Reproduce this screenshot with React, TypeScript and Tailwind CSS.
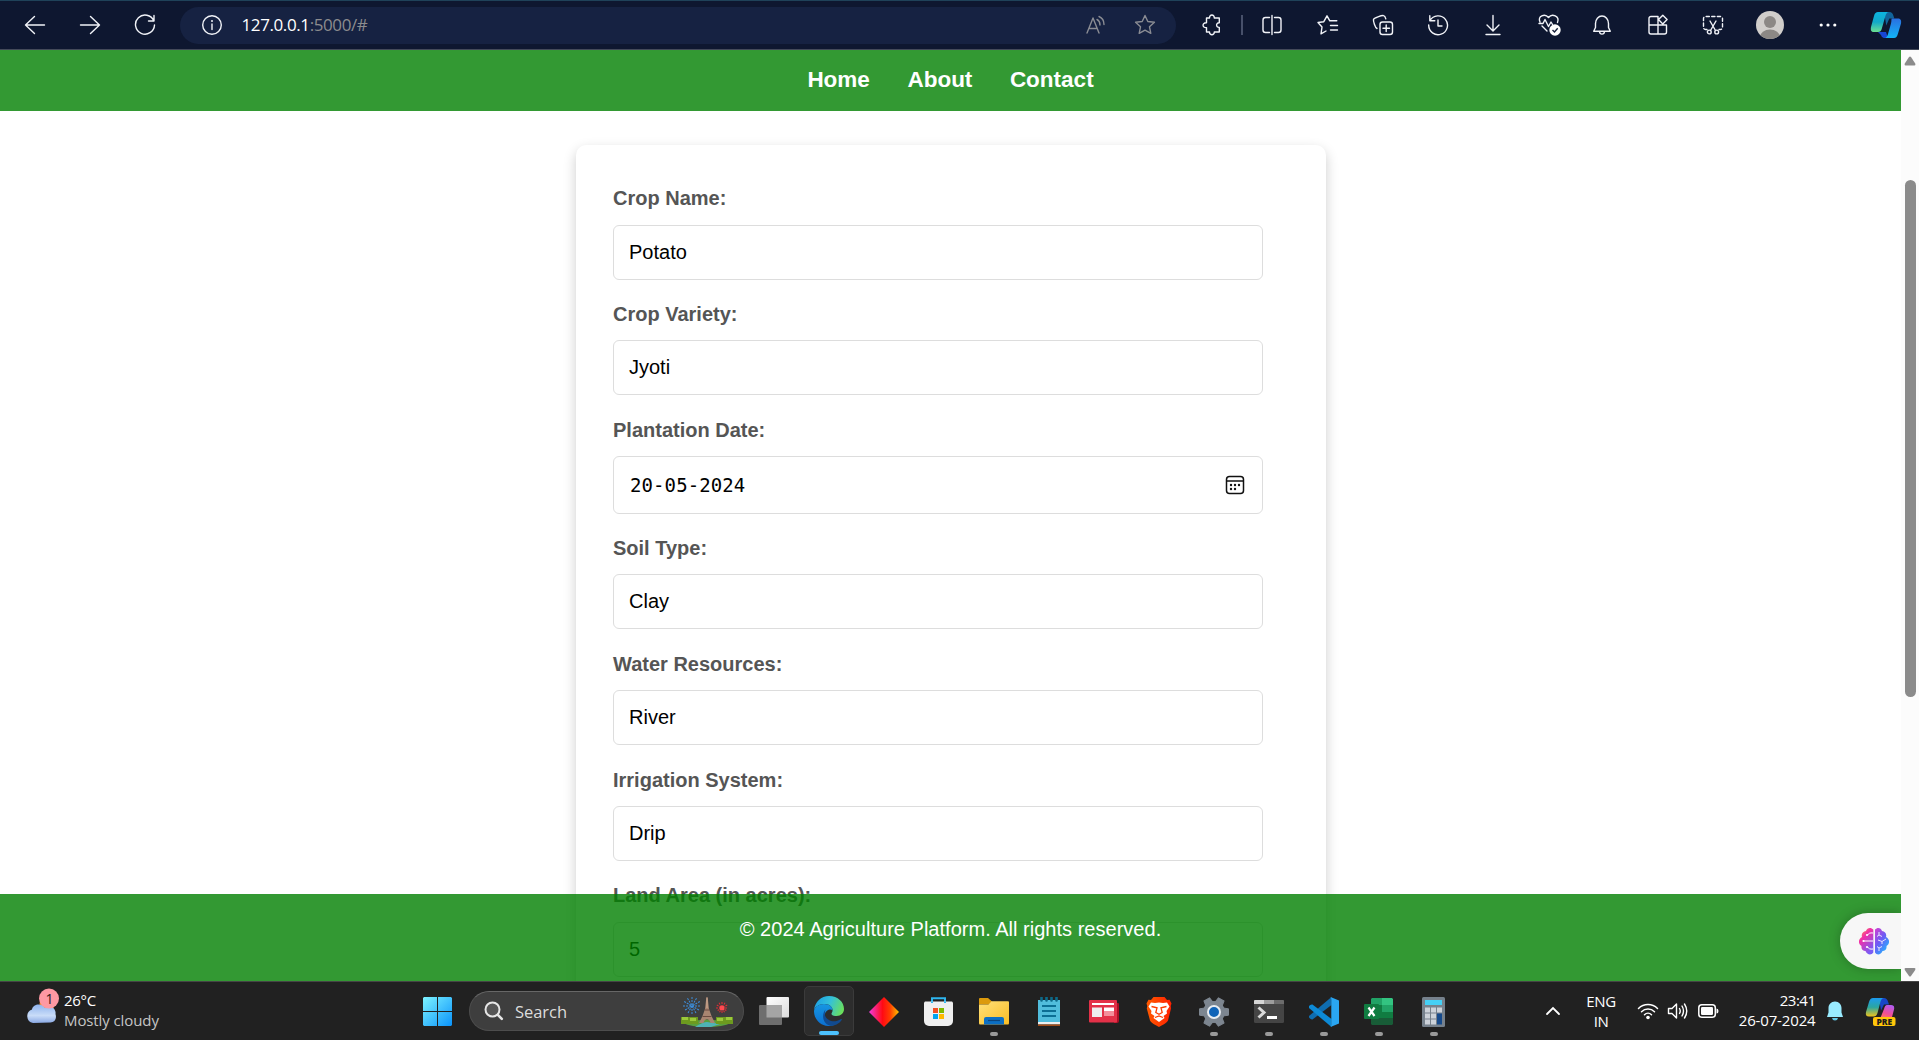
import type { ReactNode } from "react";

type IconProps = { w: number; h: number; className?: string; children: ReactNode };

function Icon({ w, h, className = "", children }: IconProps) {
  return (
    <svg width={w} height={h} viewBox={`0 0 ${w} ${h}`} fill="none" className={`shrink-0 ${className}`}>
      {children}
    </svg>
  );
}

/* ---------- Browser toolbar ---------- */

const line = { stroke: "#f1f3f8", strokeWidth: 1.4, strokeLinecap: "round", strokeLinejoin: "round" } as const;
const dim = { stroke: "#8a8c93", strokeWidth: 1.4, strokeLinecap: "round", strokeLinejoin: "round" } as const;

function Cell({ className, children }: { className: string; children: ReactNode }) {
  return <div className={`flex h-full shrink-0 items-center justify-center ${className}`}>{children}</div>;
}

function CopilotLogo() {
  return (
    <Icon w={32} h={28}>
      <defs>
        <linearGradient id="cpA" x1="0" y1="0" x2="0" y2="1">
          <stop offset="0" stopColor="#0cb4e0" />
          <stop offset="0.5" stopColor="#12a9c9" />
          <stop offset="1" stopColor="#6be092" />
        </linearGradient>
        <linearGradient id="cpB" x1="0" y1="0" x2="0" y2="1">
          <stop offset="0" stopColor="#2a6fe0" />
          <stop offset="1" stopColor="#12b4f8" />
        </linearGradient>
      </defs>
      <path d="M14 1h5c3 0 4 2 4.500 4l.8 2.500h-5l-3 7z" fill="#11649b" />
      <path d="M8 21h8l2 6h-3c-3 0-3.500-2-4-3z" fill="#1846d4" />
      <path d="M8 1h11c-2 0-3 2-3.600 4L12 17c-.8 3-2 4-4 4H4c-3 0-3.500-2-3-5L4 5c.8-3 2-4 4-4z" fill="url(#cpA)" />
      <path d="M22 7.500h6c3 0 3.500 2.500 3 5l-3 10c-.8 3-2 4.500-4 4.500H14.500c2 0 2.800-2 3.500-4l3-10.500c.8-3 0-5 1-5z" fill="url(#cpB)" />
    </Icon>
  );
}

function Toolbar() {
  return (
    <div className="flex h-[50px] w-full shrink-0 items-center border-t border-b border-t-[#1f4259] border-b-[#444a5a] bg-[#0e1730]">
      <Cell className="ml-[7.500px] w-[55px] pb-px">
        <Icon w={22} h={22}><path d="M20.500 11H1.500M10.500 2.500L1.500 11l9 8.500" {...line} /></Icon>
      </Cell>
      <Cell className="w-[55px] pb-px">
        <Icon w={22} h={22}><path d="M1.500 11h19M11.500 2.500l9 8.500-9 8.500" {...line} /></Icon>
      </Cell>
      <Cell className="w-[55px]">
        <Icon w={22} h={22}><path d="M19.800 7A9.500 9.500 0 1 0 20.500 11M20 1.500V7h-5.500" {...line} /></Icon>
      </Cell>
      <div className="ml-[7.500px] flex h-[37px] w-[996px] shrink-0 items-center rounded-full bg-[#162242]">
        <Cell className="w-[61.500px]">
          <Icon w={22} h={22} className="mr-[-2.500px]">
            <circle cx="11" cy="11" r="9.300" {...line} />
            <path d="M11 10v5.500" {...line} />
            <circle cx="11" cy="7" r="1" fill="#f1f3f8" />
          </Icon>
        </Cell>
        <div className="flex-1 font-['Open_Sans',sans-serif] text-[17px] tracking-[-0.4px] whitespace-nowrap text-white">
          <span>127.0.0.1</span>
          <span className="text-[#8c8c8e]">:5000/#</span>
        </div>
        <Cell className="w-[49px]">
          <Icon w={22} h={22}>
            <path d="M2 19L8 4l6 15M4 14.500h8" {...dim} />
            <path d="M12 5.500c2 1 3 3 3 5.500M14 2.500c3.500 1.500 5 4.500 5 8" {...dim} />
          </Icon>
        </Cell>
        <Cell className="mr-[7px] w-[49px]">
          <Icon w={22} h={22}>
            <path d="M11 1.500l2.800 6 6.600.8-4.900 4.500 1.300 6.500L11 16.200l-5.800 3.100 1.300-6.500L1.600 8.300l6.600-.8z" {...dim} />
          </Icon>
        </Cell>
      </div>
      <Cell className="ml-[8px] w-[55px]">
        <Icon w={22} h={22}>
          <path d="M5.500 4h3c-.2-4 5-4 4.800 0h5v4.800c-3.600-.4-3.600 5 0 4.600V18h-5c.2 3.600-5 3.600-4.800 0h-3v-4.400c-4.600.4-4.600-5.200 0-4.800z" {...line} />
        </Icon>
      </Cell>
      <div className="ml-[1.500px] h-5 w-0.5 shrink-0 bg-[#47506a]" />
      <Cell className="ml-[1.500px] w-[55px]">
        <Icon w={22} h={22}>
          <path d="M8.500 3.500h-4a2.500 2.500 0 0 0-2.500 2.500v10a2.500 2.500 0 0 0 2.500 2.500h4M13.500 3.500h4a2.500 2.500 0 0 1 2.500 2.500v10a2.500 2.500 0 0 1-2.500 2.500h-4M11 1.500v19" {...line} />
        </Icon>
      </Cell>
      <Cell className="ml-px w-[55px]">
        <Icon w={22} h={22}>
          <path d="M9 17l-5 2.800L5 13 1 8.500l5.800-.8L10 1.800l2.800 5h7M13.500 11.500h7M13.500 16h7" {...line} />
        </Icon>
      </Cell>
      <Cell className="w-[55px]">
        <Icon w={22} h={22}>
          <rect x="8" y="8" width="12.500" height="12.500" rx="2.500" {...line} />
          <path d="M14.200 11v6.500M11 14.200h6.500M5 14.500C3 13.500 1.200 7 1.500 5.500 2 4 9.500 1.300 11.500 1.600c1.200.2 1.900 1.600 2.300 3.200" {...line} />
        </Icon>
      </Cell>
      <Cell className="w-[55px]">
        <Icon w={22} h={22}>
          <path d="M3 6.500A9.400 9.400 0 1 1 1.700 11M2.800 1.800v5h5M11 6v6h4" {...line} />
        </Icon>
      </Cell>
      <Cell className="w-[55px]">
        <Icon w={22} h={22}><path d="M11 1.500v15M5 11l6 6 6-6M4 20.500h14" {...line} /></Icon>
      </Cell>
      <Cell className="w-[55px]">
        <Icon w={24} h={24} className="ml-[2px]">
          <path d="M3 9C0 3 8 0 11.500 4.500 15 0 23 3 20.500 9.500M2 10.500h4l2-4 3.500 7 2.500-4.500 1.500 2.500M5 13l5 5" {...line} />
          <circle cx="18" cy="17" r="5.700" fill="#fff" />
          <path d="M15.500 17l2 2 3.200-3.700" stroke="#17203a" strokeWidth="1.400" />
        </Icon>
      </Cell>
      <Cell className="w-[53px] pb-px">
        <Icon w={22} h={22}>
          <path d="M4.500 9.500a6.500 7.500 0 0 1 13 0v4l1.800 3.700H2.700l1.800-3.700zM8.500 17.500c.3 3.500 4.700 3.500 5 0" {...line} />
        </Icon>
      </Cell>
      <Cell className="w-[58px]">
        <Icon w={22} h={22} className="ml-px">
          <path d="M11 2.500H4a2 2 0 0 0-2 2V18a2 2 0 0 0 2 2h13.500a2 2 0 0 0 2-2v-7H2M11 2.500V20M15.800 1.300l4.300 4.300-4.300 4.300-4.300-4.300z" {...line} />
        </Icon>
      </Cell>
      <Cell className="w-[53px]">
        <Icon w={22} h={22}>
          <path d="M5 15.500H3.500a2 2 0 0 1-2-2v-9a2 2 0 0 1 2-2h15a2 2 0 0 1 2 2v9a2 2 0 0 1-2 2H17" {...line} strokeDasharray="3.200 2.400" />
          <path d="M8 7l5.500 9.500M14 7l-5.500 9.500" {...line} />
          <circle cx="7.300" cy="18" r="1.900" {...line} />
          <circle cx="14.700" cy="18" r="1.900" {...line} />
        </Icon>
      </Cell>
      <Cell className="ml-px w-[60px]">
        <Icon w={28} h={28}>
          <clipPath id="avatar"><circle cx="14" cy="14" r="14" /></clipPath>
          <g clipPath="url(#avatar)">
            <rect width="28" height="28" fill="#d1cecb" />
            <circle cx="14" cy="11" r="6" fill="#8c8885" />
            <ellipse cx="14" cy="26" rx="10" ry="7.500" fill="#8c8885" />
          </g>
        </Icon>
      </Cell>
      <Cell className="w-[55px]">
        <Icon w={18} h={4}>
          <circle cx="2.200" cy="2" r="1.600" fill="#fff" />
          <circle cx="9" cy="2" r="1.600" fill="#fff" />
          <circle cx="15.800" cy="2" r="1.600" fill="#fff" />
        </Icon>
      </Cell>
      <Cell className="w-[62px]"><CopilotLogo /></Cell>
    </div>
  );
}

/* ---------- Page ---------- */

const fields = [
  { label: "Crop Name:", value: "Potato" },
  { label: "Crop Variety:", value: "Jyoti" },
  { label: "Plantation Date:", value: "20-05-2024", date: true },
  { label: "Soil Type:", value: "Clay" },
  { label: "Water Resources:", value: "River" },
  { label: "Irrigation System:", value: "Drip" },
  { label: "Land Area (in acres):", value: "5" },
];

function CalendarIcon() {
  return (
    <Icon w={20} h={20}>
      <rect x="1.500" y="1.500" width="17" height="17" rx="3" stroke="#111" strokeWidth="1.500" />
      <path d="M1.500 6h17" stroke="#111" strokeWidth="1.500" />
      <g fill="#111">
        <circle cx="6" cy="10" r="1.200" /><circle cx="10" cy="10" r="1.200" /><circle cx="14" cy="10" r="1.200" />
        <circle cx="6" cy="14" r="1.200" /><circle cx="10" cy="14" r="1.200" />
      </g>
    </Icon>
  );
}

function FormCard() {
  return (
    <form className="mt-[34px] h-[1000px] w-[750px] shrink-0 rounded-[10px] bg-white p-[37.500px] pt-[37.100px] shadow-[0_5px_12.500px_rgba(0,0,0,0.200)]">
      {fields.map((f) => (
        <div key={f.label} className="mb-[18.250px]">
          <div className="mb-[10px] flex h-[32.500px] items-center text-[20px] font-bold text-[#555]">{f.label}</div>
          {f.date ? (
            <div className="flex h-[57.500px] w-[650px] items-center justify-between rounded-[6px] border border-[#ddd] pr-[17px] pl-[16px] font-['DejaVu_Sans_Mono',monospace] text-[19px] tracking-[0.1px] text-black">
              <span>{f.value}</span>
              <CalendarIcon />
            </div>
          ) : (
            <div className="flex h-[55px] w-[650px] items-center rounded-[6px] border border-[#ddd] px-[15px] pb-px text-[20px] text-black">
              {f.value}
            </div>
          )}
        </div>
      ))}
    </form>
  );
}

function BrainIcon() {
  return (
    <Icon w={30} h={28}>
      <defs>
        <linearGradient id="brL" x1="0" y1="0" x2="0.600" y2="1">
          <stop offset="0" stopColor="#ffab2e" />
          <stop offset="0.400" stopColor="#f22fa8" />
          <stop offset="1" stopColor="#7a5cf5" />
        </linearGradient>
        <linearGradient id="brR" x1="0" y1="0" x2="0.700" y2="1">
          <stop offset="0" stopColor="#d43fd0" />
          <stop offset="0.500" stopColor="#6c5cf5" />
          <stop offset="1" stopColor="#22b8ff" />
        </linearGradient>
      </defs>
      <path d="M14.300 2.500C12 0 8 .5 7 4 4 4.500 2 7 3 10c-4 2-4 7-.5 9-.5 3 1.500 5 4 5 1.500 4 6 4.500 7.800 1.500z" fill="url(#brL)" />
      <path d="M16 2.500c2.300-2.500 6-2 7 1.500 3 .5 5 3 4 6 4 2 4 7 .5 9 .5 3-1.500 5-4 5-1.500 4-5.700 4.500-7.500 1.500z" fill="url(#brR)" />
      <path d="M14 6c-3-.5-4.500.5-5.500 2M4 14h10M14 22c-3 .5-4.500-.5-5.500-2" stroke="#fff" strokeWidth="1" />
      <path d="M20 5v3l-2 1.500M20 8l3 1.500M19 13l4 1.500V17M23 14.500l4-2.500M20 24v-3l-2-1.500M20 21l3-1.500" stroke="#e7e4ff" strokeWidth="1" />
      <circle cx="4.500" cy="14" r="1.100" fill="#fff" /><circle cx="8" cy="8" r="1.100" fill="#fff" /><circle cx="8" cy="20" r="1.100" fill="#fff" />
    </Icon>
  );
}

function Page() {
  return (
    <div className="flex h-[931px] w-full shrink-0 bg-white font-['Liberation_Sans',Arial,sans-serif]">
      <div className="relative flex h-full w-[1901px] flex-col items-center overflow-hidden">
        <nav className="flex h-[61px] w-full shrink-0 items-center justify-center gap-[37.500px] bg-[#339933] pb-0.5 text-[22.500px] font-bold text-white">
          <a>Home</a>
          <a>About</a>
          <a>Contact</a>
        </nav>
        <FormCard />
        <footer className="absolute inset-x-0 bottom-0 flex h-[87px] justify-center bg-[#008000]/80 pt-[24px] text-[20px] leading-[23px] tracking-[0.020px] text-white">
          © 2024 Agriculture Platform. All rights reserved.
        </footer>
        <div className="absolute right-0 bottom-[12px] flex h-[56px] w-[61px] items-center rounded-l-full bg-[#f7f7f7] pb-px pl-[19px] shadow-[0_0_12px_rgba(0,0,0,0.250)]">
          <BrainIcon />
        </div>
      </div>
      <div className="flex w-[18px] flex-col items-center bg-[#fcfcfc]">
        <Icon w={14} h={18}><path d="M6 7L1.800 13.500Q1 15.500 2.500 15.500h9Q13 15.500 12.200 13.500L8 7Q7 5.800 6 7z" fill="#8b8b8b" /></Icon>
        <div className="mt-[112px] ml-px h-[517px] w-[11px] rounded-full bg-[#8b8b8b]" />
        <div className="flex-1" />
        <Icon w={14} h={18}><path d="M6 13L1.800 7Q1 5 2.500 5h9Q13 5 12.200 7L8 13Q7 14.200 6 13z" fill="#8b8b8b" /></Icon>
      </div>
    </div>
  );
}

/* ---------- Taskbar ---------- */

function TaskCell({ running, children }: { running?: boolean; children: ReactNode }) {
  return (
    <div className="flex h-[59px] w-[55px] shrink-0 flex-col items-center">
      <div className="flex h-[59px] w-full items-center justify-center">{children}</div>
      {running && <div className="-mt-[9px] h-1 w-2 shrink-0 rounded-full bg-[#9a9a9a]" />}
    </div>
  );
}

function WeatherIcon() {
  return (
    <Icon w={36} h={38}>
      <defs>
        <linearGradient id="cloud" x1="0" y1="0" x2="0" y2="1">
          <stop offset="0" stopColor="#8fb4ee" />
          <stop offset="0.600" stopColor="#c9dcf8" />
          <stop offset="1" stopColor="#8aa9e4" />
        </linearGradient>
      </defs>
      <circle cx="22" cy="16" r="7.500" fill="#f58a1c" />
      <path d="M8 35a7 7 0 0 1-1-13.500C8 15 18 15 20 20c5-4 11.500.5 10.500 6 1.500 5-1 8.500-5 8.500z" fill="url(#cloud)" />
      <circle cx="24" cy="10.500" r="10" fill="#fe99a3" />
      <text x="24.500" y="15.500" textAnchor="middle" fontSize="14" fontFamily="Open Sans" fill="#2b1a1c">1</text>
    </Icon>
  );
}

function WindowsLogo() {
  return (
    <Icon w={29} h={29}>
      <defs>
        <linearGradient id="win" x1="0" y1="0" x2="29" y2="29" gradientUnits="userSpaceOnUse">
          <stop offset="0" stopColor="#7df3ff" />
          <stop offset="1" stopColor="#0a93fb" />
        </linearGradient>
      </defs>
      <path d="M1 0h13v14H0V1zM15 0h13l1 1v13H15zM0 15h14v14H1l-1-1zM15 15h14v13l-1 1H15z" fill="url(#win)" />
    </Icon>
  );
}

function SearchArt() {
  const rays = [0, 30, 60, 90, 120, 150];
  return (
    <Icon w={52} h={32}>
      <g stroke="#3d8edb" strokeWidth="1" strokeDasharray="2 1">
        {rays.map((a) => <path key={a} d="M2 10h18" transform={`rotate(${a} 11 10)`} />)}
      </g>
      <g stroke="#e12d35" strokeWidth="1" strokeDasharray="2 1">
        {rays.map((a) => <path key={a} d="M35 12h12" transform={`rotate(${a} 41 12)`} />)}
      </g>
      <circle cx="41" cy="12" r="2.500" fill="#ff4a50" />
      <path d="M2 27q24-7 48 0-8 4-24 4T2 27z" fill="#5a9f3e" />
      <path d="M14 31q8-5 12-5l13 2-9 3z" fill="#4fb3b6" />
      <path d="M0 21h17v7H0z" fill="#6d9a1f" />
      <path d="M35 21h17v7H35z" fill="#6d9a1f" />
      <path d="M1 21h6v3H1zM9 22h6v3H9zM36 22h6v3h-6zM45 21h6v3h-6z" fill="#9cc93b" />
      <path d="M25.400 1h1.200l1.400 12 2.500 7 3.500 7h-4.500c-1-5-6-5-7 0H18l3.500-7 2.500-7z" fill="#a98571" />
      <path d="M23.500 14h5M21.500 20.500h9" stroke="#6d4b40" strokeWidth="1.200" />
      <path d="M26 2v10" stroke="#d9b7a0" strokeWidth=".8" />
    </Icon>
  );
}

function EdgeLogo() {
  return (
    <Icon w={30} h={30}>
      <defs>
        <linearGradient id="edA" x1="0" y1="0.300" x2="1" y2="0.600">
          <stop offset="0" stopColor="#1ba0e6" />
          <stop offset="0.500" stopColor="#35c1d8" />
          <stop offset="1" stopColor="#6be05a" />
        </linearGradient>
        <linearGradient id="edB" x1="0" y1="0" x2="0" y2="1">
          <stop offset="0" stopColor="#1796e2" />
          <stop offset="1" stopColor="#0c6fd0" />
        </linearGradient>
      </defs>
      <path d="M0 14C1 6 7 0 15 0c9 0 15 6 15 13 0 4-3 7-7.500 7-4 0-6-1.500-4.500-3.500C20 13 17 8 10.500 8 5 8 1 11 0 14z" fill="url(#edA)" />
      <path d="M0 15C.5 11 5 8 10 8c5.500 0 8.500 3 8.500 6-4-2-8.500 1.500-7.500 7 1 6 6 8.700 9 8-2 .8-4 1-6 1C6 29.500 0 23 0 15z" fill="url(#edB)" />
      <path d="M11.500 13.500c-3 8 4 13 11 11.500 2-.5 3.500-1.500 4.500-2 1-.3 1 .5.500 1.200C25 28 20 30 16.500 29.800 9 28.500 7 19 11.500 13.500z" fill="#114a8f" />
    </Icon>
  );
}

function BraveLogo() {
  return (
    <Icon w={26} h={30}>
      <defs>
        <linearGradient id="brave" x1="0" y1="0" x2="1" y2="0">
          <stop offset="0" stopColor="#ff5a00" />
          <stop offset="1" stopColor="#ff2000" />
        </linearGradient>
      </defs>
      <path d="M7.500 0h11l2.500 3 2.500-.3 2 3.800-.8 2.500.3 2.500-3 12c-.6 2-7 5.500-9 6.500-2-1-8.400-4.500-9-6.500L.8 11.500 1.300 9 .5 6.500l2-3.800L5 3z" fill="url(#brave)" />
      <path d="M5 5.500l4 .5 4-.5 4 .5 4-.5 2.500 4-3 4.500.5 2.500-3.500 2.500 1 2L13 25l-5.500-4 1-2L5 16.500l.5-2.500-3-4.500z" fill="#fff" />
      <path d="M5.500 9.500l5.500 1.300-1.200 4.700 3.200 1.700 3.200-1.700L15 10.800l5.500-1.300M9 20.500l4-1.500 4 1.500" stroke="#ff3d00" strokeWidth="1.300" />
    </Icon>
  );
}

const teeth = [0, 60, 120, 180, 240, 300];

function SettingsLogo() {
  return (
    <Icon w={30} h={30}>
      <g fill="#7d8690">
        <circle cx="15" cy="15" r="11" />
        {teeth.map((a) => <path key={a} d="M11 6l.8-5.500h6.400L19 6z" transform={`rotate(${a + 30} 15 15)`} stroke="#7d8690" strokeLinejoin="round" />)}
      </g>
      <circle cx="15" cy="15" r="6" fill="#0f64b8" stroke="#e8edf2" strokeWidth="2" />
    </Icon>
  );
}

function Taskbar() {
  return (
    <div className="flex h-[59px] w-full shrink-0 border-t border-[#454545] bg-[#212121] font-['Open_Sans',sans-serif] text-white">
      <div className="flex w-[410px] shrink-0 pl-[24.500px]">
        <div className="pt-[6px]"><WeatherIcon /></div>
        <div className="flex flex-col pt-[8px] pl-[3.500px] text-[15px] leading-[20px] tracking-[-0.300px] whitespace-nowrap">
          <span>26°C</span>
          <span className="tracking-[-0.100px] text-[#c5c5c5]">Mostly cloudy</span>
        </div>
      </div>
      <TaskCell><WindowsLogo /></TaskCell>
      <div className="mt-[9px] ml-[4px] flex h-10 w-[275px] shrink-0 items-center rounded-full border border-[#4d4d4d] border-t-[#676767] bg-[#3e3e3e] pl-[14px]">
        <Icon w={20} h={20}>
          <circle cx="8.500" cy="8.500" r="7" fill="#565656" stroke="#e6e6e6" strokeWidth="2" />
          <path d="M13.800 13.800l4 4" stroke="#e6e6e6" strokeWidth="2.600" strokeLinecap="round" />
        </Icon>
        <span className="flex-1 pt-0.5 pl-[11px] text-[16.500px] tracking-[-0.050px] text-[#dcdcdc]">Search</span>
        <div className="pt-0.5 pr-[10px]"><SearchArt /></div>
      </div>
      <div className="ml-[2px] flex">
        <TaskCell>
          <Icon w={30} h={28} className="mb-px">
            <defs><linearGradient id="tv" x1="0" y1="0" x2="1" y2="1"><stop offset="0" stopColor="#fff" /><stop offset="1" stopColor="#dcdcdc" /></linearGradient></defs>
            <rect x="7.500" width="22.500" height="20.500" rx="1" fill="url(#tv)" />
            <rect y="8" width="23" height="20" rx="1" fill="#6e6e6e" />
            <rect x="7.500" y="8" width="15.500" height="12.500" fill="#a5a5a5" />
          </Icon>
        </TaskCell>
        <div className="flex h-[59px] w-[55px] flex-col items-center pt-[4px]">
          <div className="flex h-[50px] w-[50px] flex-col items-center rounded-[5px] border border-[#3b3b3b] bg-[#2d2d2d] pt-[9px]">
            <EdgeLogo />
            <div className="mt-[5px] h-1 w-5 rounded-full bg-[#4cc2ff]" />
          </div>
        </div>
        <TaskCell>
          <Icon w={30} h={30}>
            <defs><linearGradient id="dia" x1="0" y1="0" x2="1" y2="0"><stop offset="0" stopColor="#f23ce0" /><stop offset="0.450" stopColor="#ff0a14" /><stop offset="0.700" stopColor="#ff3c00" /><stop offset="1" stopColor="#ffc400" /></linearGradient></defs>
            <path d="M15 0l15 15-15 15L0 15z" fill="url(#dia)" />
          </Icon>
        </TaskCell>
        <TaskCell>
          <Icon w={29} h={29}>
            <path d="M8 6V1.200h13V6" stroke="#2eb5ee" strokeWidth="2" />
            <path d="M1 4.500h27l1 1V24a5 5 0 0 1-5 5H5a5 5 0 0 1-5-5V5.500z" fill="#efefef" />
            <path d="M8 6V4.500M21 6V4.500" stroke="#2eb5ee" strokeWidth="2" />
            <path d="M9 11h5v5H9z" fill="#f25022" /><path d="M15 11h5v5h-5z" fill="#7fba00" />
            <path d="M9 17h5v5H9z" fill="#00a4ef" /><path d="M15 17h5v5h-5z" fill="#ffb900" />
          </Icon>
        </TaskCell>
        <TaskCell running>
          <Icon w={30} h={27}>
            <defs><linearGradient id="fold" x1="0" y1="0" x2="1" y2="1"><stop offset="0" stopColor="#ffe07a" /><stop offset="1" stopColor="#f9bd24" /></linearGradient></defs>
            <path d="M0 1q0-1 1-1h8l4 3.500-3 3H0z" fill="#dc9a0c" />
            <path d="M0 6.500h9.500l3-3.200H29q1 0 1 1V25q0 1.500-1 1.500H1Q0 26.500 0 25z" fill="url(#fold)" />
            <path d="M5 26.500V21q0-2 2-2h16q2 0 2 2v5.500z" fill="#0c6fc4" />
            <path d="M9 22.500h12" stroke="#0b457f" strokeWidth="1.200" />
          </Icon>
        </TaskCell>
        <TaskCell>
          <Icon w={24} h={30}>
            <path d="M1 3h22v23H1z" fill="#51bddc" /><path d="M1 25h22v2.500H1z" fill="#eee" /><path d="M1 27.500h22V29H1z" fill="#a04c17" />
            <path d="M4.500.5v3M9.500.5v3M14.500.5v3M19.500.5v3" stroke="#0d6a8a" strokeWidth="2.600" strokeLinecap="round" />
            <path d="M5 9h14M5 14h14M5 19h14" stroke="#0c6f94" strokeWidth="1.800" />
          </Icon>
        </TaskCell>
        <TaskCell>
          <Icon w={30} h={23}>
            <path d="M26 3h3q1 0 1 1v17q0 2-2 2h-3z" fill="#a80f24" />
            <rect width="28" height="22.500" rx="1" fill="#e33148" />
            <path d="M3 3h22v2H3z" fill="#fff" />
            <path d="M3 7.500h10V17H3z" fill="#eee" />
            <path d="M15 7.500h10v3.500H15z" fill="#fff" /><path d="M15 11h10v5H15z" fill="#f38f9b" />
          </Icon>
        </TaskCell>
        <TaskCell><BraveLogo /></TaskCell>
        <TaskCell running><SettingsLogo /></TaskCell>
        <TaskCell running>
          <Icon w={30} h={23}>
            <rect width="30" height="23" rx="1.500" fill="#454545" />
            <path d="M0 4V1q0-1 1-1h9v4z" fill="#d5d5d5" /><path d="M10 0h10v4H10z" fill="#9d9d9d" /><path d="M20 0h9q1 0 1 1v3H20z" fill="#6c6c6c" />
            <path d="M4.500 7.500l5.500 5-5.500 5" stroke="#d9d9d9" strokeWidth="3" />
            <path d="M13 17.500h10" stroke="#fff" strokeWidth="3" />
          </Icon>
        </TaskCell>
        <TaskCell running>
          <Icon w={30} h={30}>
            <path d="M22.500 0v8L3.500 22.500Q2 23 0 20.500V19z" fill="#0f6db0" />
            <path d="M3.500 7.500Q1.500 7 0 9v2l22.500 19v-8z" fill="#0d8ad6" />
            <path d="M21.500 0L30 3.500v23L21.500 30q.8-1 .8-2.500v-25Q22.300 1 21.500 0z" fill="#2aa6f2" />
          </Icon>
        </TaskCell>
        <TaskCell running>
          <Icon w={29} h={27}>
            <path d="M8 0h10v7H7V1z" fill="#21a366" /><path d="M18 0h10l1 1v6H18z" fill="#33c481" />
            <path d="M7 7h11v7H7z" fill="#107c41" /><path d="M18 7h11v7H18z" fill="#21a366" />
            <path d="M7 14h22v6H7z" fill="#107c41" /><path d="M7 20h22v6l-1 1H8l-1-1z" fill="#185c37" />
            <rect y="6" width="15" height="15" rx="1" fill="#107c41" />
            <path d="M4.500 9.500l6 8.500M10.500 9.500l-6 8.500" stroke="#fff" strokeWidth="2.200" />
          </Icon>
        </TaskCell>
        <TaskCell running>
          <Icon w={23} h={30}>
            <rect width="23" height="30" rx="1.500" fill="#76818c" />
            <path d="M3 3h17v5H3z" fill="#45d0f5" />
            <g fill="#ccd2d9">
              <path d="M3 10.500h5v5H3zM9 10.500h5v5H9zM15 10.500h5v5h-5zM3 16.500h5v5H3zM9 16.500h5v5H9zM3 22.500h5v5H3zM9 22.500h5v5H9z" />
            </g>
            <path d="M15 16.500h5v11h-5z" fill="#164a8b" />
          </Icon>
        </TaskCell>
      </div>
      <div className="flex flex-1 text-[15px] leading-[20px]">
        <Cell className="ml-[71px] w-[42px]">
          <Icon w={16} h={10}><path d="M2 8l6-6 6 6" stroke="#fff" strokeWidth="1.800" strokeLinecap="round" /></Icon>
        </Cell>
        <div className="ml-[4px] flex w-[46px] flex-col items-center pt-[9px] tracking-[-0.400px]">
          <span>ENG</span>
          <span>IN</span>
        </div>
        <Cell className="ml-[13px] w-[22px]">
          <Icon w={22} h={18}>
            <path d="M1.500 6.500a13.500 13.500 0 0 1 19 0M4.500 9.700a9.200 9.200 0 0 1 13 0M7.500 12.700a5 5 0 0 1 7 0" stroke="#fff" strokeWidth="1.500" strokeLinecap="round" />
            <circle cx="11" cy="15.500" r="1.800" fill="#fff" />
          </Icon>
        </Cell>
        <Cell className="ml-[8px] w-[22px]">
          <Icon w={22} h={18}>
            <path d="M1.500 6.500h3.500L9.500 2v14L5 11.500H1.500z" stroke="#fff" strokeWidth="1.400" strokeLinejoin="round" />
            <path d="M12.500 6.500q1.500 2.500 0 5M15 4q3 5 0 10M17.500 2q4.500 7 0 14" stroke="#fff" strokeWidth="1.400" strokeLinecap="round" />
          </Icon>
        </Cell>
        <Cell className="ml-[9px] w-[21px]">
          <Icon w={21} h={14}>
            <rect x=".8" y=".8" width="16.500" height="12.400" rx="3" stroke="#fff" strokeWidth="1.500" />
            <rect x="3" y="3" width="12" height="8" rx="1.200" fill="#fff" />
            <path d="M18.500 4.500q2 0 2 2.500t-2 2.500z" fill="#fff" />
          </Icon>
        </Cell>
        <div className="flex w-[96.500px] flex-col items-end pt-[8px] whitespace-nowrap">
          <span className="tracking-[-0.500px]">23:41</span>
          <span className="tracking-[-0.150px]">26-07-2024</span>
        </div>
        <Cell className="ml-[10.500px] w-[18px]">
          <Icon w={18} h={20}>
            <path d="M9 .5c4 0 6.500 3 6.500 6.500v4.500L17 16H1l1.500-4.500V7C2.500 3.500 5 .5 9 .5z" fill="#99ebff" />
            <path d="M6 17h6q-.5 2.500-3 2.500T6 17z" fill="#62c8e6" />
          </Icon>
        </Cell>
        <Cell className="ml-[21px] w-[32px]">
          <Icon w={32} h={30} className="mt-0.5">
            <defs>
              <linearGradient id="preA" x1="0" y1="0" x2="0" y2="1"><stop offset="0" stopColor="#1c9bf0" /><stop offset="0.500" stopColor="#2ba6a0" /><stop offset="1" stopColor="#f0c41b" /></linearGradient>
              <linearGradient id="preB" x1="0.700" y1="0" x2="0.300" y2="1"><stop offset="0" stopColor="#b15cf0" /><stop offset="0.600" stopColor="#f04e96" /><stop offset="1" stopColor="#ff7a5c" /></linearGradient>
            </defs>
            <path d="M14 1h5q3 0 4 3.500l1 3h-5l-3 6z" fill="#1746c7" />
            <path d="M8 1h11q-2.500 0-3.600 4L12.500 16q-1 3.500-4 3.500H4q-4 0-3-4.500L4 5q1.200-4 4-4z" fill="url(#preA)" />
            <path d="M22 8h4q4 0 3 4.500L26.500 22H15l4-10q1-4 3-4z" fill="url(#preB)" />
            <rect x="8" y="20" width="22.500" height="9" rx="2" fill="#ffc60a" />
            <text x="19.300" y="27.500" textAnchor="middle" fontSize="8.500" fontWeight="800" fontFamily="Open Sans" fill="#1c1c1c">PRE</text>
          </Icon>
        </Cell>
      </div>
    </div>
  );
}

export default function App() {
  return (
    <div className="flex h-[1040px] w-[1919px] flex-col overflow-hidden">
      <Toolbar />
      <Page />
      <Taskbar />
    </div>
  );
}
